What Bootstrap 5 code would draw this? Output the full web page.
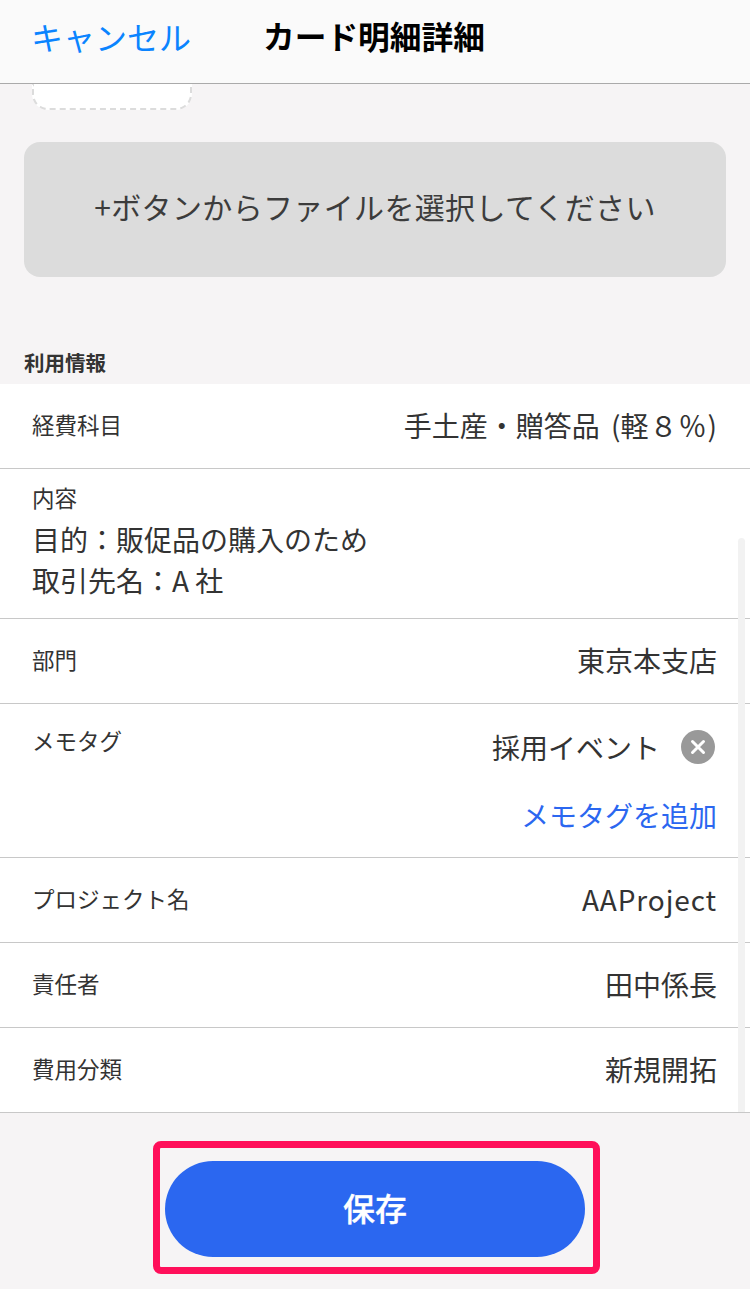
<!DOCTYPE html>
<html lang="ja">
<head>
<meta charset="utf-8">
<title>カード明細詳細</title>
<link href="https://cdn.jsdelivr.net/npm/bootstrap@5.3.0/dist/css/bootstrap.min.css" rel="stylesheet">
<style>
html,body{height:100%;}
body{margin:0;background:#f6f4f5;font-family:"Noto Sans CJK JP","Liberation Sans",sans-serif;color:#333;overflow:hidden;}
.screen{width:750px;height:1289px;position:relative;overflow:hidden;}
.topbar{height:84px;background:#fafafa;border-bottom:1px solid #aaa;padding-left:31px;padding-bottom:11px;}
.cancel-link{color:#0a84ff;font-size:32px;width:232px;text-decoration:none;line-height:1;}
.top-title{color:#000;font-size:31.7px;font-weight:700;line-height:1;}
.drop-stub{width:160px;height:26px;margin-left:32px;background:#fff;border:2px dashed #dcdcdc;border-top:0;border-radius:0 0 16px 16px;}
.file-hint{height:135px;margin:32px 24px 0;padding-bottom:6px;background:#dcdcdc;border-radius:16px;font-size:30px;color:#3c3c3c;letter-spacing:.35px;}
.sect-label{margin:73px 0 0 24px;height:34px;font-size:20.5px;font-weight:700;line-height:24px;color:#333;}
.info-list{background:#fff;}
.info-row{height:85px;padding:0 33px 0 32px;border-bottom:1px solid #c8c8c8;}
.info-key{font-size:22.5px;color:#333;line-height:1;margin-bottom:4px;}
.info-val{font-size:28px;color:#333;line-height:1;margin-bottom:3px;}
.wide-gap{word-spacing:5px;}
.wide-tail{letter-spacing:1px;}
.wide-latin{letter-spacing:.9px;}
.row-content{height:150px;padding-top:17px;display:block;}
.row-content .info-key{margin-bottom:0;}
.row-content .info-val{line-height:41px;margin:10px 0 0;}
.row-memo{height:154px;padding-top:25px;align-items:flex-start;}
.row-memo .info-val{margin-bottom:0;}
.tag-clear{width:34px;height:34px;background:#999;border-radius:50%;margin:1px 2px 0 21px;}
.memo-add{color:#2b67f0;font-size:28px;line-height:1;margin-top:37px;}
.scroll-track{position:absolute;left:738px;top:538px;width:7px;height:574px;background:#f2f2f2;border-radius:4px 4px 0 0;}
.foot-zone{padding-top:28px;}
.save-frame{width:447px;height:133px;margin-left:153px;border:7px solid #ff0f5a;border-radius:8px;padding:13px 5px 0;}
.save-btn{width:420px;height:96px;padding-bottom:10px;background:#2b67f0;border:0;border-radius:48px;color:#fff;font-size:32px;font-weight:500;line-height:1;-webkit-text-stroke:.3px #fff;}
.save-btn:hover,.save-btn:active{background:#2b67f0;color:#fff;}
</style>
</head>
<body>
<div class="screen">
  <header class="topbar d-flex align-items-center">
    <a class="cancel-link" href="#">キャンセル</a>
    <div class="top-title">カード明細詳細</div>
  </header>
  <div class="drop-stub"></div>
  <div class="file-hint d-flex align-items-center justify-content-center">+ボタンからファイルを選択してください</div>
  <div class="sect-label">利用情報</div>
  <div class="info-list">
    <div class="info-row d-flex justify-content-between align-items-center"><span class="info-key">経費科目</span><span class="info-val wide-gap">手土産・贈答品 (<span class="wide-tail">軽８％</span>)</span></div>
    <div class="info-row row-content"><div class="info-key">内容</div><div class="info-val">目的：販促品の購入のため<br>取引先名：A 社</div></div>
    <div class="info-row d-flex justify-content-between align-items-center"><span class="info-key">部門</span><span class="info-val">東京本支店</span></div>
    <div class="info-row row-memo d-flex justify-content-between">
      <span class="info-key">メモタグ</span>
      <div class="d-flex flex-column align-items-end">
        <div class="d-flex align-items-center">
          <span class="info-val">採用イベント</span>
          <span class="tag-clear d-flex align-items-center justify-content-center">
            <svg width="18" height="18" viewBox="0 0 18 18"><path d="M3.5 3.5L14.5 14.5M14.5 3.5L3.5 14.5" stroke="#fff" stroke-width="3" stroke-linecap="round"/></svg>
          </span>
        </div>
        <a class="memo-add text-decoration-none" href="#">メモタグを追加</a>
      </div>
    </div>
    <div class="info-row d-flex justify-content-between align-items-center"><span class="info-key">プロジェクト名</span><span class="info-val wide-latin">AAProject</span></div>
    <div class="info-row d-flex justify-content-between align-items-center"><span class="info-key">責任者</span><span class="info-val">田中係長</span></div>
    <div class="info-row d-flex justify-content-between align-items-center"><span class="info-key">費用分類</span><span class="info-val">新規開拓</span></div>
  </div>
  <div class="scroll-track"></div>
  <div class="foot-zone">
    <div class="save-frame"><button type="button" class="btn save-btn">保存</button></div>
  </div>
</div>
<script src="https://cdn.jsdelivr.net/npm/bootstrap@5.3.0/dist/js/bootstrap.bundle.min.js"></script>
</body>
</html>
